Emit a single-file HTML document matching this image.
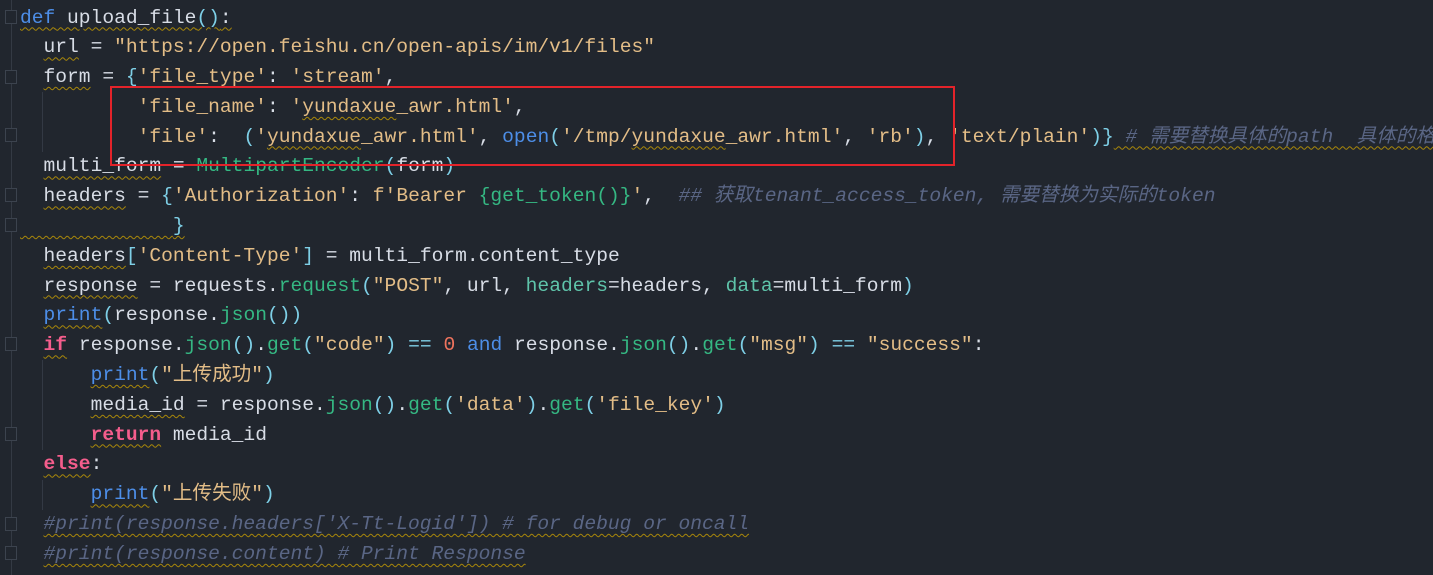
<!DOCTYPE html><html><head><meta charset="utf-8"><style>
body{margin:0;width:1433px;height:575px;background:#21262e;overflow:hidden;position:relative}
pre{margin:0;position:absolute;left:20px;top:3.5px;font-family:"Liberation Mono","Noto Sans CJK SC",monospace;font-size:19.6px;line-height:29.8px;color:#d8dde6;white-space:pre}
.k{color:#4d8ee8}.p{color:#f45d8c;font-weight:bold}.s{color:#e3bd87}.f{color:#35b883}.b{color:#7ecfe6}.a{color:#5fc4aa}.n{color:#f0745e}
.c{color:#5a6685;font-style:italic}.w{text-decoration:underline wavy #a8870a;text-decoration-thickness:1px;text-underline-offset:4px}
.g{position:absolute;left:11px;top:0;width:1px;height:575px;background:#343a44}
.box{position:absolute;left:110px;top:86px;width:841px;height:76px;border:2px solid #e3232a}
.fold{position:absolute;left:5px;width:10px;height:12px;border:1px solid #3c434e;background:#21262e}
.ig{position:absolute;left:42px;width:1px;background:#333944}
</style></head><body>
<div class="g"></div>
<div class="fold" style="top:10px"></div><div class="fold" style="top:70px"></div><div class="fold" style="top:128px"></div><div class="fold" style="top:188px"></div><div class="fold" style="top:218px"></div><div class="fold" style="top:337px"></div><div class="fold" style="top:427px"></div><div class="fold" style="top:517px"></div><div class="fold" style="top:546px"></div>
<div class="ig" style="top:92px;height:60px"></div><div class="ig" style="top:360px;height:90px"></div><div class="ig" style="top:480px;height:30px"></div>
<pre><span class="w"><span class="k">def</span> upload_file<span class="b">()</span>:</span>
  <span class="w">url</span> = <span class="s">"https://open.feishu.cn/open-apis/im/v1/files"</span>
  <span class="w">form</span> = <span class="b">{</span><span class="s">'file_type'</span>: <span class="s">'stream'</span>,
          <span class="s">'file_name'</span>: <span class="s">'<span class="w">yundaxue</span>_awr.html'</span>,
          <span class="s">'file'</span>:  <span class="b">(</span><span class="s">'<span class="w">yundaxue</span>_awr.html'</span>, <span class="k">open</span><span class="b">(</span><span class="s">'/tmp/<span class="w">yundaxue</span>_awr.html'</span>, <span class="s">'rb'</span><span class="b">)</span>, <span class="s">'text/plain'</span><span class="b">)}</span><span class="c w"> # 需要替换具体的path  具体的格式</span>
  <span class="w">multi_form</span> = <span class="f">MultipartEncoder</span><span class="b">(</span>form<span class="b">)</span>
  <span class="w">headers</span> = <span class="b">{</span><span class="s">'Authorization'</span>: <span class="s">f'Bearer </span><span class="f">{get_token()}</span><span class="s">'</span>,  <span class="c">## 获取tenant_access_token, 需要替换为实际的token</span>
<span class="w">             <span class="b">}</span></span>
  <span class="w">headers</span><span class="b">[</span><span class="s">'Content-Type'</span><span class="b">]</span> = multi_form.content_type
  <span class="w">response</span> = requests.<span class="f">request</span><span class="b">(</span><span class="s">"POST"</span>, url, <span class="a">headers</span>=headers, <span class="a">data</span>=multi_form<span class="b">)</span>
  <span class="w"><span class="k">print</span></span><span class="b">(</span>response.<span class="f">json</span><span class="b">())</span>
  <span class="p w">if</span> response.<span class="f">json</span><span class="b">()</span>.<span class="f">get</span><span class="b">(</span><span class="s">"code"</span><span class="b">)</span> <span class="b">==</span> <span class="n">0</span> <span class="k">and</span> response.<span class="f">json</span><span class="b">()</span>.<span class="f">get</span><span class="b">(</span><span class="s">"msg"</span><span class="b">)</span> <span class="b">==</span> <span class="s">"success"</span>:
      <span class="w"><span class="k">print</span></span><span class="b">(</span><span class="s">"上传成功"</span><span class="b">)</span>
      <span class="w">media_id</span> = response.<span class="f">json</span><span class="b">()</span>.<span class="f">get</span><span class="b">(</span><span class="s">'data'</span><span class="b">)</span>.<span class="f">get</span><span class="b">(</span><span class="s">'file_key'</span><span class="b">)</span>
      <span class="p w">return</span> media_id
  <span class="p w">else</span>:
      <span class="w"><span class="k">print</span></span><span class="b">(</span><span class="s">"上传失败"</span><span class="b">)</span>
  <span class="c w">#print(response.headers['X-Tt-Logid']) # for debug or oncall</span>
  <span class="c w">#print(response.content) # Print Response</span></pre>
<div class="box"></div>
</body></html>
